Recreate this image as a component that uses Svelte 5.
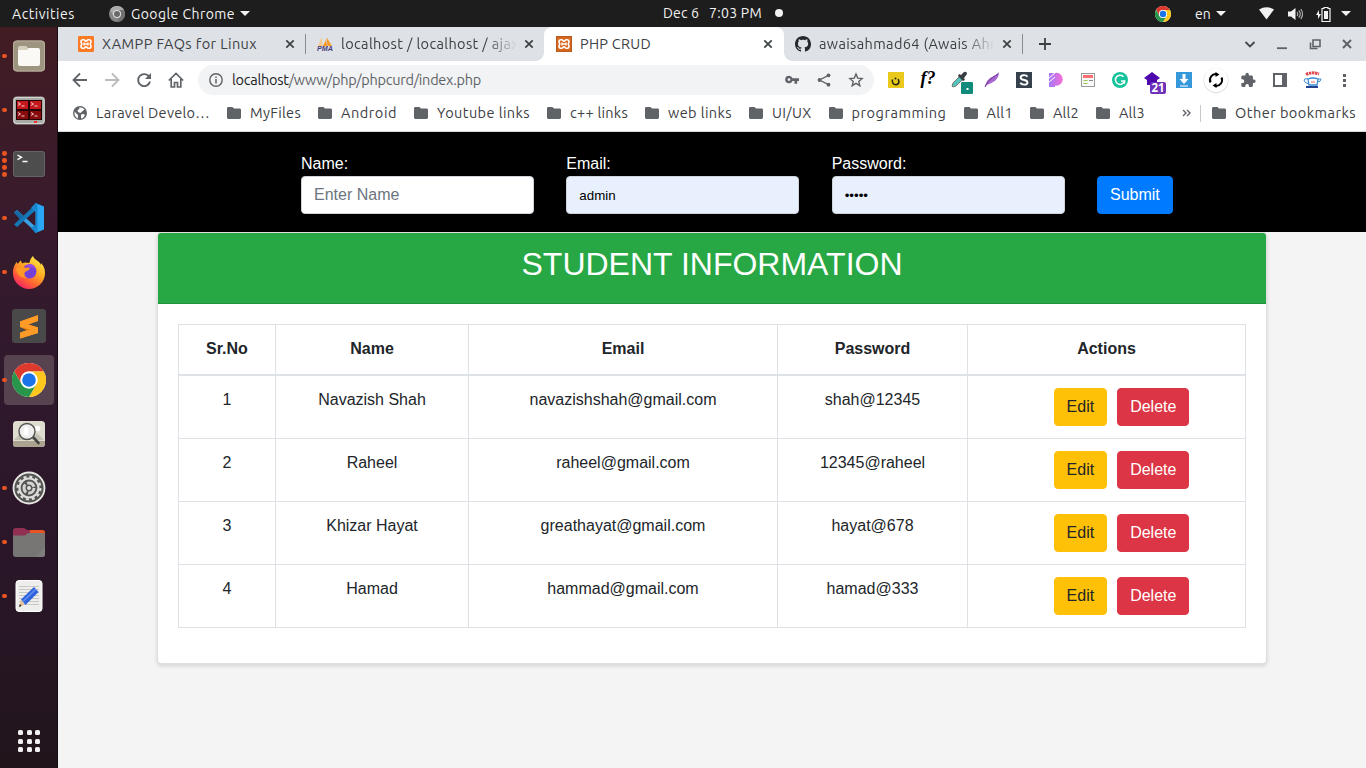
<script>
  // Spreads a label's letters so that it takes exactly the given width.
  function fit(node, width) {
    const natural = node.getBoundingClientRect().width;
    const count = node.textContent.length;
    node.style.letterSpacing = `${(width - natural) / count}px`;
  }

  const tabs = [
    { title: 'XAMPP FAQs for Linux', w: 155, icon: 'xampp' },
    { title: 'localhost / localhost / ajax', w: 178, icon: 'pma', fade: true },
    { title: 'PHP CRUD', w: 71, icon: 'xampp', active: true },
    { title: 'awaisahmad64 (Awais Ahm', w: 184, icon: 'github', fade: true }
  ];

  const bookmarks = [
    ['MyFiles', 51], ['Android', 56], ['Youtube links', 93], ['c++ links', 58],
    ['web links', 64], ['UI/UX', 39.5], ['programming', 95], ['All1', 26.5], ['All2', 26], ['All3', 26]
  ];

  const dock = [
    { name: 'files', dots: 1 }, { name: 'terminator', dots: 1 }, { name: 'terminal', dots: 4 },
    { name: 'vscode', dots: 1 }, { name: 'firefox', dots: 1 }, { name: 'sublime', dots: 0 },
    { name: 'chrome', dots: 1, active: true }, { name: 'viewer', dots: 0 }, { name: 'settings', dots: 1 },
    { name: 'folder', dots: 1 }, { name: 'editor', dots: 1 }
  ];

  const extensions = ['noon', 'font', 'picker', 'feather', 'ess', 'pset', 'news', 'grammar', 'stack', 'down', 'sync', 'puzzle', 'panel', 'profile', 'more'];

  const students = [
    { id: 1, name: 'Navazish Shah', email: 'navazishshah@gmail.com', password: 'shah@12345' },
    { id: 2, name: 'Raheel', email: 'raheel@gmail.com', password: '12345@raheel' },
    { id: 3, name: 'Khizar Hayat', email: 'greathayat@gmail.com', password: 'hayat@678' },
    { id: 4, name: 'Hamad', email: 'hammad@gmail.com', password: 'hamad@333' }
  ];
</script>

{#snippet chromeLogo(size)}
  <svg width={size} height={size} viewBox="0 0 48 48">
    <circle cx="24" cy="24" r="24" fill="#fff" />
    <path d="M3.2 12A24 24 0 0 1 44.8 12H24a12 12 0 0 0-10.4 18z" fill="#dc3a2c" />
    <path d="M44.8 12A24 24 0 0 1 24 48l10.4-18A12 12 0 0 0 24 12z" fill="#fcc61d" />
    <path d="M24 48A24 24 0 0 1 3.2 12l10.4 18a12 12 0 0 0 20.8 0z" fill="#28964a" />
    <circle cx="24" cy="24" r="12" fill="#fff" />
    <circle cx="24" cy="24" r="9.6" fill="#1a73e8" />
  </svg>
{/snippet}

{#snippet folder()}
  <svg class="folder" width="14" height="12" viewBox="0 0 14 12"><path d="M1.4 0H5.5L7 1.6h5.6c.8 0 1.4.6 1.4 1.4v7.6c0 .8-.6 1.4-1.4 1.4H1.4C.6 12 0 11.400 0 10.600V1.400C0 .6.6 0 1.400 0z" fill="#5f6368" /></svg>
{/snippet}

{#snippet close()}
  <svg width="10" height="10" viewBox="0 0 10 10"><path d="M1.300 1.300l7.400 7.400M8.700 1.300l-7.400 7.400" stroke="#3c4043" stroke-width="1.700" /></svg>
{/snippet}

{#snippet favicon(kind, dark)}
  {#if kind === 'xampp'}
    <svg width="16" height="16" viewBox="0 0 16 16">
      <rect width="16" height="16" rx="1" fill={dark ? '#d9651b' : '#fb7a24'} />
      {#if dark}<rect x=".5" y=".5" width="15" height="15" fill="none" stroke="#b85a22" />{/if}
      <path d="M5 3.800h.8c1.200 0 1 1.500 2.200 1.500s1-1.500 2.200-1.500h.8c1.500 0 2 .9 2 2 0 1.300-.8 1.500-.8 2.200s.8.900.8 2.200c0 1.100-.5 2-2 2h-.8c-1.200 0-1-1.500-2.200-1.500s-1 1.500-2.200 1.500H5c-1.500 0-2-.9-2-2C3 8.900 3.800 8.700 3.800 8S3 7.100 3 5.800c0-1.100.5-2 2-2z" fill="none" stroke="#fff" stroke-width="1.600" />
      <path d="M5.500 8h5M6 6.500v3M10 6.500v3" stroke="#fff" stroke-width="1.400" />
    </svg>
  {:else if kind === 'pma'}
    <svg width="16" height="16" viewBox="0 0 16 16">
      <path d="M4.800 1L1 10h4.500z" fill="#f8c98b" /><path d="M9 .5C9.500 4 7.500 8 5.500 10.200h4.300z" fill="#f7941e" />
      <path d="M9.800 1.500L10.300 10H15z" fill="#f99b2c" />
      <text x="0" y="15.300" font-size="6.500" textLength="16" lengthAdjust="spacingAndGlyphs" font-weight="700" font-style="italic" fill="#46417c" font-family="Liberation Sans, sans-serif">PMA</text>
    </svg>
  {:else}
    <svg width="16" height="16" viewBox="0 0 16 16"><path fill="#24292f" d="M8 0C3.580 0 0 3.580 0 8c0 3.540 2.290 6.530 5.470 7.590.4.070.55-.17.55-.38 0-.19-.01-.82-.01-1.490-2.010.37-2.530-.49-2.690-.94-.09-.23-.48-.94-.82-1.130-.28-.15-.68-.52-.01-.53.63-.01 1.080.58 1.230.82.72 1.210 1.870.87 2.330.66.07-.52.28-.87.51-1.070-1.780-.2-3.640-.89-3.640-3.950 0-.87.31-1.590.82-2.150-.08-.2-.36-1.020.08-2.120 0 0 .67-.21 2.200.82.64-.18 1.320-.27 2-.27s1.360.09 2 .27c1.530-1.040 2.200-.82 2.200-.82.44 1.100.16 1.920.08 2.120.51.56.82 1.270.82 2.150 0 3.070-1.870 3.750-3.650 3.950.29.25.54.73.54 1.480 0 1.070-.01 1.930-.01 2.200 0 .21.15.46.55.38A8.010 8.010 0 0 0 16 8c0-4.420-3.580-8-8-8z" /></svg>
  {/if}
{/snippet}

{#snippet dockIcon(name)}
  {#if name === 'chrome'}
    {@render chromeLogo(34)}
  {:else}
    <svg width="34" height="34" viewBox="0 0 34 34">
      {#if name === 'files'}
        <rect x="1" y="1.500" width="32" height="31" rx="4" fill="#aaa08b" />
        <rect x="1.500" y="2" width="31" height="30" rx="3.500" fill="#9e9580" stroke="#b7ae9b" />
        <path d="M6 9q0-2 2-2h6l2 2h9q2 0 2 2v3H6z" fill="#d8d0bf" />
        <path d="M6 12q0-1 1-1h8l2-2h9q2 0 2 2v14q0 2-2 2H8q-2 0-2-2z" fill="#faf9f6" />
      {:else if name === 'terminator'}
        <rect x="1" y="3.500" width="32" height="28" rx="4" fill="#a7aaa5" /><rect x="2" y="4.500" width="30" height="26" rx="3" fill="none" stroke="#d5d7d2" />
        <rect x="4" y="7" width="26" height="20" fill="#240405" />
        <path d="M5 8h11v8H5zM18 8h11v8H18z" fill="#c5181d" /><path d="M5 18h11v8H5zM18 18h11v8H18z" fill="#870a0d" />
        <path d="M6 9.500l2.500 1.500L6 12.500M9.500 13h3M19 9.500l2.500 1.500-2.500 1.500M22.500 13h3M6 19.500L8.500 21 6 22.500M9.500 23h3M19 19.500l2.500 1.500-2.500 1.500M22.500 23h3" fill="none" stroke="#f4c9c9" />
        <rect x="22" y="28" width="3" height="2" fill="#f5302c" />
      {:else if name === 'terminal'}
        <rect x="1" y="4" width="32" height="26" rx="3" fill="#4d4d4d" /><rect x="1.500" y="4.500" width="31" height="25" rx="2.500" fill="none" stroke="#646464" />
        <path d="M5.500 8l4 2.300-4 2.300M10.500 14.500h5" fill="none" stroke="#fff" stroke-width="1.400" />
      {:else if name === 'vscode'}
        <path d="M2 11.500l3-2.500L25 27v5z" fill="#3ba3df" /><path d="M2 23.500l3 2.500L25 8V2z" fill="#1477b8" />
        <path d="M23.500 2L32 5.500v23L23.500 32z" fill="#2aa7f4" /><path d="M23.500 2l-4.500 5 5 4.500v12L19 27l4.500 5 2-1.500v-27z" fill="#1787d0" />
        <path d="M2 11.500l3-2.500 7 6.500-4 3z" fill="#1569a5" />
      {:else if name === 'firefox'}
        <defs>
          <linearGradient id="fox" x1=".85" y1="0" x2=".2" y2="1"><stop offset="0" stop-color="#fff14a" /><stop offset=".4" stop-color="#ffad22" /><stop offset=".7" stop-color="#ff6334" /><stop offset="1" stop-color="#f5186c" /></linearGradient>
        </defs>
        <path d="M21 1c-3 3-3.500 6-3.500 7C12 6.500 10 8.500 10 8.500L9 5.500C6 8 6 9 6 9L4.500 7C.5 13 1 17 1 18a16 16 0 0 0 32 0c0-5-2-8-4-10l0 2C27 5 22 5 21 1z" fill="url(#fox)" />
        <circle cx="17.500" cy="16.500" r="7" fill="#7440d6" /><path d="M12 11q9-5 12 3-7-3-12-3z" fill="#9c4ae2" />
        <path d="M4 14c3-4 7-2.500 8-1.500 3 .5 5-.5 6 .5-1 3-4 3-5 4-1 2-1 4 2 6-7 0-10-4-11-9z" fill="#ff9825" />
      {:else if name === 'sublime'}
        <rect width="34" height="34" rx="3" fill="#494949" />
        <path d="M8 12.500L26 6v6L16 15.500l10 3v5.500L8 29.500v-6l10-3.500-10-2.500z" fill="#ff9820" /><path d="M8 12.500l18 6v1L16 22 8 18z" fill="#e07b0a" />
        <path d="M8 12.500l18-6v5.500l-10 3.500 10 3v5.500L8 29.500v-5.500l10-3.500-10-2.500z" fill="#ff9b26" />
      {:else if name === 'viewer'}
        <rect x="1" y="4" width="32" height="26" rx="3.500" fill="#dfddd0" /><path d="M1 24h32v3q0 3-3 3H4q-3 0-3-3z" fill="#aaa38f" />
        <path d="M2 23l8-8 8 8zM20 23l5-7 7 7z" fill="#c2c0b0" /><circle cx="25.500" cy="11.500" r="2.800" fill="#fff" />
        <path d="M21 20l5.500 6" stroke="#444" stroke-width="2.600" stroke-linecap="round" /><circle cx="15" cy="14.500" r="8" fill="#eee" stroke="#52524f" stroke-width="1.400" /><path d="M13 9l3 1v9l-5-2z" fill="#fff" />
      {:else if name === 'settings'}
        <circle cx="17" cy="17" r="15.500" fill="#555653" stroke="#e8e8e5" stroke-width="1.800" />
        <circle cx="17" cy="17" r="9.500" fill="none" stroke="#dfdfdc" stroke-width="2.200" /><circle cx="17" cy="17" r="11.400" fill="none" stroke="#dfdfdc" stroke-width="2.200" stroke-dasharray="3 2.970" />
        <circle cx="17" cy="17" r="5" fill="none" stroke="#d3d3cf" stroke-width="3" stroke-dasharray="8.500 2" /><circle cx="17" cy="17" r="2" fill="#dfdfdc" />
      {:else if name === 'folder'}
        <path d="M1 6q0-3 3-3h8l3 2h15q3 0 3 3v6H1z" fill="#913052" /><path d="M18 5h12q3 0 3 3v5H18z" fill="#e85424" />
        <path d="M1 10.500h12l3-2.500h15q2 0 2 2v19q0 3-3 3H4q-3 0-3-3z" fill="#777674" /><path d="M33 22l-9 10h6q3 0 3-3z" fill="#7f7f7e" />
      {:else if name === 'editor'}
        <rect x="4" y="1.500" width="26" height="31" rx="3" fill="#eeeeed" stroke="#fff" />
        <path d="M7 7.500h20M7 10.500h20M7 13.500h20M7 16.500h20M7 19.500h20M7 22.500h20M7 25.500h20" stroke="#bcbcbc" stroke-width=".8" />
        <path d="M7 28l2-7 3.500 4.500z" fill="#e9bd8e" /><path d="M7 28l1-3 1.500 2z" fill="#222" />
        <path d="M9 20.500L22 8l4.500 5L13.500 26z" fill="#2e63dd" /><path d="M11 22.500L24 10" stroke="#6691ef" stroke-width="1.500" />
      {/if}
    </svg>
  {/if}
{/snippet}

{#snippet extension(name)}
  <svg width="32" height="34" viewBox="0 0 32 34">
    {#if name === 'noon'}
      <rect x="8" y="9" width="16" height="16" fill="#e8c91c" /><path d="M12.500 16.500c-1.500 6 5.500 6.500 6.500 2.500l-.8-3" fill="none" stroke="#28270f" stroke-width="1.500" /><circle cx="15.500" cy="15.500" r="1" fill="#28270f" />
    {:else if name === 'font'}
      <text x="8.500" y="21" class="fq">f?</text>
    {:else if name === 'picker'}
      <path d="M8 23l1-3 7-7 3 3-7 7-3 1z" fill="#55c4bd" stroke="#777" /><path d="M15 11l2 1 3-3q3-1 3 2l-3 4 1 2-2 1-5-5z" fill="#373d42" />
      <rect x="17" y="19" width="12" height="12" rx="1" fill="#128b7c" /><rect x="22.500" y="25" width="2" height="2" fill="#fff" />
    {:else if name === 'feather'}
      <path d="M9 24c1-3 1-6 5-9 3-2 7-3 9-6 0 4-2 8-6 10-3 2-5 2-6 3z" fill="#a967cf" /><path d="M9 24c2-5 6-9 13-13" stroke="#663292" fill="none" />
    {:else if name === 'ess'}
      <rect x="8" y="9" width="16" height="16" fill="#37414e" /><path d="M19.500 13.800c-1.500-2.300-6.800-2.200-6.800.6 0 3.500 6.800 1.800 6.800 5 0 2.900-5.700 3-7.200.4" fill="none" stroke="#fff" stroke-width="1.900" />
    {:else if name === 'pset'}
      <defs><linearGradient id="pst" x1="0" y1="0" x2="1" y2="0"><stop offset="0" stop-color="#a47af8" /><stop offset="1" stop-color="#f56dd3" /></linearGradient></defs>
      <path d="M9 10h6a6.400 6.400 0 1 1 0 12.500V24H9z" fill="url(#pst)" /><path d="M8 16l8-7M8 20l7-6" stroke="#fff" stroke-width="1" />
    {:else if name === 'news'}
      <rect x="9.500" y="10.500" width="13" height="13" fill="#f8f8f8" stroke="#9b9b9b" /><rect x="11" y="12" width="10" height="3" fill="#ff6e70" /><path d="M11.500 17.500h4M11.500 20.500h4" stroke="#97ca50" /><path d="M17 17.500h4" stroke="#888" />
    {:else if name === 'grammar'}
      <circle cx="16" cy="17" r="8" fill="#15c39a" /><path d="M19.500 13.700a4.600 4.600 0 1 0 1 4.300h-3.500M20.500 18v2.800" fill="none" stroke="#fff" stroke-width="1.500" />
    {:else if name === 'stack'}
      <path d="M8 15l8-6 8 6-3 2v5H11v-5z" fill="#4d09ad" /><rect x="14" y="19" width="16" height="12" rx="2" fill="#6e32ba" /><text x="22" y="29" text-anchor="middle" class="badge">21</text>
    {:else if name === 'down'}
      <rect x="8" y="9" width="16" height="16" fill="#3498db" /><path d="M14.500 11h3v5h3L16 21l-4.500-5h3zM12 22.500h8v1h-8z" fill="#fff" />
    {:else if name === 'sync'}
      <circle cx="16" cy="17.500" r="12.500" fill="#dadada" /><circle cx="16" cy="17" r="12" fill="#fff" />
      <path d="M10.500 19.500A6 6 0 0 1 16.500 11M21.500 14.500A6 6 0 0 1 15.500 23" fill="none" stroke="#000" stroke-width="2" /><path d="M15.500 9v5l4-2.500zM16.500 20v5l-4-2.500z" fill="#000" />
    {:else if name === 'puzzle'}
      <g transform="translate(8 9) scale(.68)"><path fill="#5f6368" d="M20.500 11H19V7c0-1.100-.9-2-2-2h-4V3.500a2.500 2.500 0 0 0-5 0V5H4c-1.100 0-2 .9-2 2v3.800h1.500a2.700 2.700 0 0 1 0 5.400H2V20c0 1.100.9 2 2 2h3.800v-1.500a2.700 2.700 0 0 1 5.400 0V22H17c1.100 0 2-.9 2-2v-4h1.500a2.500 2.500 0 0 0 0-5z" /></g>
    {:else if name === 'panel'}
      <rect x="10" y="11" width="12" height="12" fill="none" stroke="#5f6368" stroke-width="2" /><path d="M18 10h5v14h-5z" fill="#5f6368" />
    {:else if name === 'profile'}
      <path d="M10 11.500q6-3 13-.5" fill="none" stroke="#df4b50" stroke-width="3" stroke-dasharray="2.500 .6" /><path d="M12 16q5-2 10 0l-1 6h-8z" fill="#fff" stroke="#398bd2" stroke-width="1.300" /><path d="M12 16q-4-1-4 1 0 3 5 4M22 16h3q0 3-4 3" fill="none" stroke="#398bd2" /><path d="M10 23h12v2H10z" fill="#224490" /><path d="M15 19h4" stroke="#e66" />
    {:else if name === 'more'}
      <path d="M15 11h3v3h-3zM15 16h3v3h-3zM15 21h3v3h-3z" fill="#5f6368" />
    {/if}
  </svg>
{/snippet}

<div class="desktop">
  <header class="topbar">
    <span class="activities"><span use:fit={63}>Activities</span></span>
    <svg width="16" height="16" viewBox="0 0 16 16"><circle cx="8" cy="8" r="8" fill="#858585" /><path d="M1 4a8 8 0 0 1 14 0H8a4 4 0 0 0-3.500 6z" fill="#aaa" /><path d="M15 4a8 8 0 0 1-7 12l3.500-6A4 4 0 0 0 8 4z" fill="#717171" /><circle cx="8" cy="8" r="4" fill="#e1e1e1" /><circle cx="8" cy="8" r="3" fill="#696969" /></svg>
    <span class="appname"><span use:fit={104}>Google Chrome</span></span>
    <svg class="caret" width="10" height="5" viewBox="0 0 10 5"><path d="M0 0h10L5 5z" fill="#f2f2f2" /></svg>
    <div class="clock"><span use:fit={36}>Dec 6</span><span use:fit={53}>7:03 PM</span><i></i></div>
    <div class="tray">
      {@render chromeLogo(16)}
      <span class="lang"><span use:fit={16}>en</span></span>
      <svg width="10" height="5" viewBox="0 0 10 5"><path d="M0 0h10L5 5z" fill="#f2f2f2" /></svg>
      <svg class="wifi" width="15" height="13" viewBox="0 0 15 13"><path d="M0 2.500Q7.500-2 15 2.500L7.500 12.500z" fill="#f2f2f2" /></svg>
      <svg class="sound" width="15" height="14" viewBox="0 0 15 14"><path d="M0 4.500h3L7.500 1v12L3 9.500H0z" fill="#f2f2f2" /><path d="M9 5q1.500 2 0 4M10.800 3.500q3 3.500 0 7M12.800 2q3.500 5 0 10" fill="none" stroke="#aaa" stroke-width="1.200" /></svg>
      <svg class="battery" width="15" height="16" viewBox="0 0 15 16"><path d="M3 4L0 9h2v4l3-5H3z" fill="#f2f2f2" /><path d="M8 1.500h4v1h2v13H6v-13h2z" fill="none" stroke="#f2f2f2" stroke-width="1.200" /><path d="M8 5h4v8H8z" fill="#f2f2f2" /></svg>
      <svg width="10" height="5" viewBox="0 0 10 5"><path d="M0 0h10L5 5z" fill="#f2f2f2" /></svg>
    </div>
  </header>

  <div class="workspace">
    <aside class="dock">
      {#each dock as item}
        <div class="slot">
          <div class="dots">{#each Array(item.dots) as _}<i></i>{/each}</div>
          <div class="tile" class:active={item.active}>{@render dockIcon(item.name)}</div>
        </div>
      {/each}
      <div class="apps">{#each Array(9) as _}<i></i>{/each}</div>
    </aside>

    <main class="browser">
      <div class="tabstrip">
        {#each tabs as tab, i}
          <div class="tab" class:active={tab.active} class:sep={i === 0 || i === 3}>
            {@render favicon(tab.icon, tab.active)}
            <div class="title" class:fade={tab.fade}><span use:fit={tab.w}>{tab.title}</span></div>
            {@render close()}
          </div>
        {/each}
        <svg class="plus" width="12" height="12" viewBox="0 0 12 12"><path d="M6 0v12M0 6h12" stroke="#3c4043" stroke-width="1.800" /></svg>
        <div class="controls">
          <svg width="12" height="12" viewBox="0 0 12 12"><path d="M1.500 4L6 8.500 10.500 4" fill="none" stroke="#45494d" stroke-width="1.800" /></svg>
          <svg width="12" height="12" viewBox="0 0 12 12"><path d="M1 10.200h10" stroke="#5f6368" stroke-width="1.800" /></svg>
          <svg width="12" height="12" viewBox="0 0 12 12"><path d="M4 2h7v6.500H4zM1.500 4.500V10.500H8.500" fill="none" stroke="#5f6368" stroke-width="1.600" /></svg>
          <svg width="12" height="12" viewBox="0 0 12 12"><path d="M2 2l8 8M10 2l-8 8" stroke="#5f6368" stroke-width="2" /></svg>
        </div>
      </div>

      <div class="toolbar">
        <div class="nav">
          <svg width="16" height="16" viewBox="0 0 16 16"><path d="M15 8H2M8 1.500L1.500 8 8 14.500" fill="none" stroke="#5f6368" stroke-width="1.800" /></svg>
          <svg width="16" height="16" viewBox="0 0 16 16"><path d="M1 8h13M8 1.500L14.500 8 8 14.500" fill="none" stroke="#babcbe" stroke-width="1.800" /></svg>
          <svg width="16" height="16" viewBox="0 0 16 16"><path d="M13.300 5A6 6 0 1 0 14 9.500" fill="none" stroke="#5f6368" stroke-width="1.900" /><path d="M15 1v6H9z" fill="#5f6368" /></svg>
          <svg width="16" height="16" viewBox="0 0 16 16"><path d="M.8 8.500L8 1.500l7.200 7M3.200 7v8h3.300v-4.500h3V15h3.300V7" fill="none" stroke="#5f6368" stroke-width="1.700" /></svg>
        </div>
        <div class="omnibox">
          <svg width="14" height="14" viewBox="0 0 14 14"><circle cx="7" cy="7" r="6.200" fill="none" stroke="#5f6368" stroke-width="1.400" /><path d="M7 6v4.500M7 3.400v1.500" stroke="#5f6368" stroke-width="1.500" /></svg>
          <div class="url"><span use:fit={249}><b>localhost</b>/www/php/phpcurd/index.php</span></div>
          <svg width="16" height="16" viewBox="0 0 16 16"><path d="M5 4a3.800 3.800 0 1 0 3.500 5.200h2V12h2.700V9.200H15V6.500H8.500A3.800 3.800 0 0 0 5 4zm0 2.500a1.400 1.400 0 1 1 0 2.800 1.400 1.400 0 0 1 0-2.800z" transform="translate(0 -.3)" fill="#5f6368" fill-rule="evenodd" /></svg>
          <svg width="16" height="16" viewBox="0 0 16 16"><path d="M12.500 3.300L3.500 8l9 4.700" fill="none" stroke="#5f6368" stroke-width="1.300" /><circle cx="12.500" cy="3.300" r="1.900" fill="#5f6368" /><circle cx="3.500" cy="8" r="1.900" fill="#5f6368" /><circle cx="12.500" cy="12.700" r="1.900" fill="#5f6368" /></svg>
          <svg width="16" height="16" viewBox="0 0 16 16"><path d="M8 2l1.700 4.100 4.400.4-3.300 2.900 1 4.300L8 11.400l-3.800 2.300 1-4.300-3.300-2.900 4.400-.4z" fill="none" stroke="#5f6368" stroke-width="1.400" /></svg>
        </div>
        <div class="extensions">{#each extensions as ext}{@render extension(ext)}{/each}</div>
      </div>

      <div class="bookmarks">
        <div class="mark">
          <svg width="14" height="14" viewBox="0 0 14 14"><circle cx="7" cy="7" r="7" fill="#5f6368" /><path d="M1.500 5.500L5 9v3.500L3 11.300Q1 9 1.500 5.500zM6 1.600q4-.6 5.500 2L9 5.500 7.500 7 5 6 4.500 4 6.500 3zM8 8.500l2.500-.5 1.500 1-2 3-2 .5z" fill="#fff" /></svg>
          <span use:fit={114}>Laravel Develo…</span>
        </div>
        {#each bookmarks as [label, w]}
          <div class="mark">{@render folder()}<span use:fit={w}>{label}</span></div>
        {/each}
        <div class="tail">
          <svg width="9" height="8" viewBox="0 0 9 8"><path d="M1 1l3 3-3 3M5 1l3 3-3 3" fill="none" stroke="#5f6368" stroke-width="1.400" /></svg>
          <i></i>
          <div class="mark">{@render folder()}<span use:fit={121}>Other bookmarks</span></div>
        </div>
      </div>

      <section class="page">
        <form class="entry">
          <div class="field"><label for="name">Name:</label><input id="name" type="text" placeholder="Enter Name" /></div>
          <div class="field"><label for="email">Email:</label><input id="email" class="filled" type="text" value="admin" /></div>
          <div class="field"><label for="password">Password:</label><input id="password" class="filled" type="password" value="admin" /></div>
          <button class="btn primary" type="button">Submit</button>
        </form>

        <div class="card">
          <h2>STUDENT INFORMATION</h2>
          <div class="body">
            <table>
              <colgroup><col class="c1" /><col class="c2" /><col class="c3" /><col class="c4" /><col /></colgroup>
              <thead><tr><th>Sr.No</th><th>Name</th><th>Email</th><th>Password</th><th>Actions</th></tr></thead>
              <tbody>
                {#each students as s}
                  <tr>
                    <td>{s.id}</td><td>{s.name}</td><td>{s.email}</td><td>{s.password}</td>
                    <td><div class="actions"><button class="btn warning" type="button">Edit</button><button class="btn danger" type="button">Delete</button></div></td>
                  </tr>
                {/each}
              </tbody>
            </table>
          </div>
        </div>
      </section>
    </main>
  </div>
</div>

<style>
  :global(body) { margin: 0; overflow: hidden; }
  * { box-sizing: border-box; }
  svg { display: block; flex: none; }
  .desktop { width: 1366px; height: 768px; display: flex; flex-direction: column; font: 14.5px/20px Ubuntu, "Noto Sans", sans-serif; white-space: nowrap; overflow: hidden; }

  .topbar { height: 27px; background: #1d1d1d; color: #f2f2f2; display: flex; align-items: center; position: relative; font-size: 14px; flex: none; }
  .activities { width: 97px; margin-right: 12px; padding-left: 12px; }
  .appname { width: 104px; margin-left: 6px; }
  .caret { margin-left: 5px; }
  .clock { position: absolute; left: 663px; top: 0; height: 26px; display: flex; align-items: center; gap: 10px; }
  .clock i { width: 8px; height: 8px; border-radius: 50%; background: #f2f2f2; margin-left: 3px; }
  .tray { margin-left: auto; display: flex; align-items: center; padding-right: 15px; }
  .lang { width: 16px; margin: 0 5px 0 24px; }
  .wifi { margin-left: 33px; }
  .sound { margin-left: 14px; }
  .battery { margin: 0 10px 0 13px; }

  .workspace { flex: 1; display: flex; min-height: 0; }
  .dock { width: 58px; flex: none; padding-top: 2px; background: linear-gradient(#421c23, #381b2c 24%, #2f182c 50%, #291627 75%, #21151c); border-right: 1px solid #160d14; display: flex; flex-direction: column; }
  .slot { height: 54px; display: flex; align-items: center; flex: none; }
  .dots { width: 4px; display: flex; flex-direction: column; gap: 2.700px; align-items: center; overflow: visible; }
  .dots i { width: 4.300px; height: 4.300px; border-radius: 50%; background: #e95420; margin-left: 5px; flex: none; }
  .tile { width: 50px; height: 50px; border-radius: 4px; display: grid; place-items: center; }
  .tile.active { background: #57424f; }
  .slot:has(.active) .dots { position: relative; z-index: 1; }
  .apps { margin: auto 0 16px 18px; display: grid; grid-template-columns: repeat(3, 5px); gap: 3.500px; }
  .apps i { width: 5px; height: 5px; border-radius: 1.500px; background: #f3f0f2; }

  .browser { flex: 1; display: flex; flex-direction: column; min-width: 0; background: #fff; }
  .tabstrip { height: 34px; background: #dee1e6; color: #3c4043; display: flex; align-items: center; padding-left: 8px; }
  .tab { width: 239px; height: 34px; padding: 0 10px 0 12px; display: flex; align-items: center; position: relative; }
  .tab.active { width: 240px; margin-right: -1px; padding-right: 11px; background: #fff; border-radius: 8px 8px 0 0; }
  .tab.active::before, .tab.active::after { content: ""; position: absolute; bottom: 0; width: 8px; height: 8px; }
  .tab.active::before { left: -8px; background: radial-gradient(circle at 0 0, transparent 7.500px, #fff 8px); }
  .tab.active::after { right: -8px; background: radial-gradient(circle at 100% 0, transparent 7.500px, #fff 8px); }
  .tab.sep::after { content: ""; position: absolute; right: -1px; top: 7px; width: 1px; height: 20px; background: #878a8f; }
  .title { width: 175px; margin: 0 8px; overflow: hidden; flex: none; }
  .tab > :global(svg:last-child) { margin-left: 0; }
  .fade { -webkit-mask-image: linear-gradient(90deg, #000 145px, transparent 176px); mask-image: linear-gradient(90deg, #000 145px, transparent 176px); }
  .plus { margin-left: 17px; }
  .controls { margin-left: auto; display: flex; gap: 20.500px; padding-right: 13px; }

  .toolbar { height: 37px; display: flex; align-items: center; padding-left: 14px; }
  .nav { display: flex; gap: 16px; width: 126px; }
  .omnibox { width: 676px; height: 30px; border-radius: 15px; background: #f1f3f4; display: flex; align-items: center; padding: 0 10px 0 11px; }
  .url { flex: 1; margin-left: 9px; color: #5f6368; }
  .url b { color: #202124; font-weight: 400; }
  .omnibox svg:nth-of-type(n+3) { margin-left: 16px; }
  .extensions { display: flex; margin-left: 6px; }
  .fq { font: italic 700 18px "Liberation Serif", serif; }
  .badge { font: 700 11.500px "Noto Sans", sans-serif; fill: #fff; }

  .bookmarks { height: 34px; padding: 0 10px 3px 15px; display: flex; align-items: center; color: #3c4043; border-bottom: 1px solid #d5d7da; gap: 17px; }
  .mark { display: flex; align-items: center; gap: 9px; }
  .mark:first-child { margin-right: 0; }
  .tail { margin-left: auto; display: flex; align-items: center; }
  .tail i { width: 1px; height: 17px; background: #c7cacd; margin: 0 11px 0 9px; }

  .page { flex: 1; background: #f4f4f4; font: 16px/24px "Liberation Sans", Arial, sans-serif; color: #212529; }
  .entry { height: 100px; background: #000; display: flex; padding: 20px 0 0 243px; gap: 32.330px; }
  .field { width: 233px; color: #fff; }
  label { display: block; height: 24px; }
  input { display: block; width: 100%; height: 38px; padding: 6px 12px; border: 1px solid #ced4da; border-radius: 4px; background: #fff; font: 16px/24px "Liberation Sans", Arial, sans-serif; color: #000; }
  input::placeholder { color: #6c757d; opacity: 1; }
  input.filled { background: #e8f0fe; font-size: 13.333px; }
  .btn { height: 38px; padding: 6px 12px; border: 1px solid; border-radius: 4px; font: 16px/24px "Liberation Sans", Arial, sans-serif; color: #fff; flex: none; }
  .primary { background: #007bff; border-color: #007bff; margin-top: 24px; }
  .warning { background: #ffc107; border-color: #ffc107; color: #212529; }
  .danger { background: #dc3545; border-color: #dc3545; }
  .card { margin-left: 99px; width: 1110px; height: 432px; background: #fff; border: 1px solid #dfdfdf; border-radius: 4px; box-shadow: 0 2px 4px rgba(0, 0, 0, .13); overflow: hidden; }
  h2 { margin: 0; height: 71px; padding: 12px 20px; background: #28a745; border-bottom: 1px solid #23923d; color: #fff; font-weight: 500; font-size: 32px; line-height: 38.400px; text-align: center; }
  .body { padding: 20px; }
  table { width: 1068px; table-layout: fixed; border-collapse: collapse; text-align: center; }
  th, td { border: 1px solid #dee2e6; padding: 12px; vertical-align: top; }
  th { border-bottom-width: 2px; height: 50px; }
  td { height: 63px; }
  .c1 { width: 97px; } .c2 { width: 193px; } .c3 { width: 309px; } .c4 { width: 190px; }
  .actions { display: flex; gap: 10px; justify-content: center; padding-left: 30px; }
</style>
